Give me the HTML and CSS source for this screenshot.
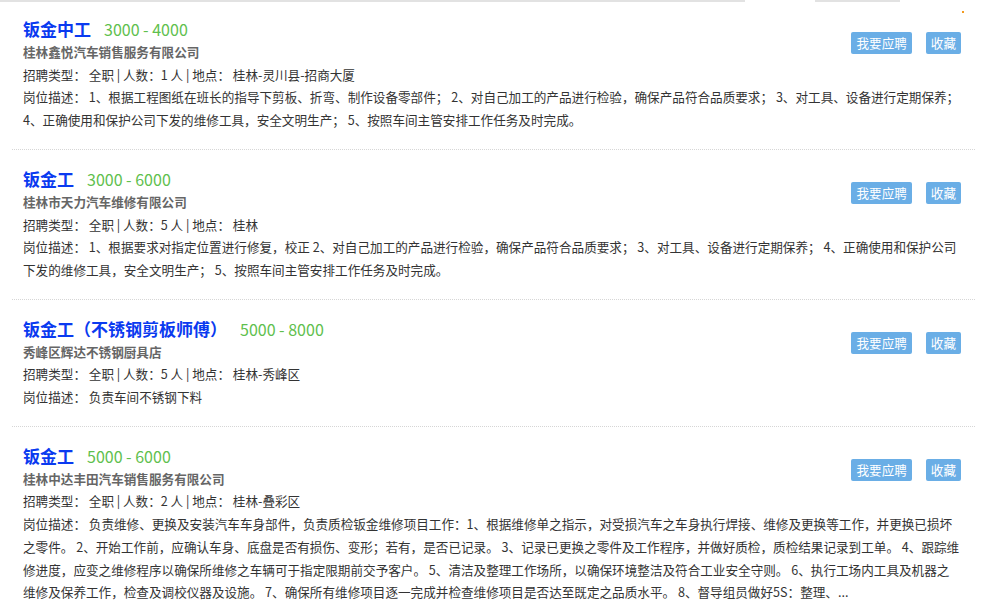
FILE: index.html
```html
<!DOCTYPE html>
<html lang="zh-CN">
<head>
    <meta charset="UTF-8">
    <meta name="viewport" content="width=device-width, initial-scale=1.0">
    <title>招聘信息</title>
    <link rel="stylesheet" href="styles.css">
</head>
<body>
    <!-- leftover of the search bar above -->
    <div class="top-strip">
        <span class="strip-a"></span>
        <span class="strip-b"></span>
        <span class="dot"></span>
    </div>

    <div class="job-list">
        <div class="job">
            <div class="job-btns">
                <a class="btn">我要应聘</a>
                <a class="btn">收藏</a>
            </div>
            <h2 class="job-title">钣金中工<span class="salary">3000 - 4000</span></h2>
            <p class="company">桂林鑫悦汽车销售服务有限公司</p>
            <p class="info">招聘类型： 全职 | 人数：1 人 | 地点： 桂林-灵川县-招商大厦</p>
            <p class="info">岗位描述： 1、根据工程图纸在班长的指导下剪板、折弯、制作设备零部件； 2、对自己加工的产品进行检验，确保产品符合品质要求； 3、对工具、设备进行定期保养； 4、正确使用和保护公司下发的维修工具，安全文明生产； 5、按照车间主管安排工作任务及时完成。</p>
        </div>

        <div class="job">
            <div class="job-btns">
                <a class="btn">我要应聘</a>
                <a class="btn">收藏</a>
            </div>
            <h2 class="job-title">钣金工<span class="salary">3000 - 6000</span></h2>
            <p class="company">桂林市天力汽车维修有限公司</p>
            <p class="info">招聘类型： 全职 | 人数：5 人 | 地点： 桂林</p>
            <p class="info">岗位描述： 1、根据要求对指定位置进行修复，校正 2、对自己加工的产品进行检验，确保产品符合品质要求； 3、对工具、设备进行定期保养； 4、正确使用和保护公司下发的维修工具，安全文明生产； 5、按照车间主管安排工作任务及时完成。</p>
        </div>

        <div class="job">
            <div class="job-btns">
                <a class="btn">我要应聘</a>
                <a class="btn">收藏</a>
            </div>
            <h2 class="job-title">钣金工（不锈钢剪板师傅）<span class="salary">5000 - 8000</span></h2>
            <p class="company">秀峰区辉达不锈钢厨具店</p>
            <p class="info">招聘类型： 全职 | 人数：5 人 | 地点： 桂林-秀峰区</p>
            <p class="info">岗位描述： 负责车间不锈钢下料</p>
        </div>

        <div class="job">
            <div class="job-btns">
                <a class="btn">我要应聘</a>
                <a class="btn">收藏</a>
            </div>
            <h2 class="job-title">钣金工<span class="salary">5000 - 6000</span></h2>
            <p class="company">桂林中达丰田汽车销售服务有限公司</p>
            <p class="info">招聘类型： 全职 | 人数：2 人 | 地点： 桂林-叠彩区</p>
            <p class="info">岗位描述： 负责维修、更换及安装汽车车身部件，负责质检钣金维修项目工作：1、根据维修单之指示，对受损汽车之车身执行焊接、维修及更换等工作，并更换已损坏之零件。 2、开始工作前，应确认车身、底盘是否有损伤、变形；若有，是否已记录。 3、记录已更换之零件及工作程序，并做好质检，质检结果记录到工单。 4、跟踪维修进度，应变之维修程序以确保所维修之车辆可于指定限期前交予客户。 5、清洁及整理工作场所，以确保环境整洁及符合工业安全守则。 6、执行工场内工具及机器之维修及保养工作，检查及调校仪器及设施。 7、确保所有维修项目逐一完成并检查维修项目是否达至既定之品质水平。 8、督导组员做好5S：整理、...</p>
        </div>
    </div>
</body>
</html>
```

FILE: styles.css
```css
*{
    padding: 0;
    margin: 0;
    box-sizing: border-box;
}
body{
    background: #fff;
    font-family: "Microsoft YaHei", "Noto Sans CJK SC", sans-serif;
    font-size: 12.6px;
    color: #333;
}

.top-strip{
    height: 2px;
    display: flex;
    position: relative;
}
.strip-a{
    width: 745px;
    background: #e2e2e2;
}
.strip-b{
    width: 85px;
    margin-left: 70px;
    background: #e2e2e2;
}
.dot{
    position: absolute;
    left: 962px;
    top: 11px;
    width: 2px;
    height: 2px;
    background: #f39a1e;
}

.job-list{
    margin: -2px 8px 0 12px;
}

.job{
    padding: 17px 14px 17px 11px;
    border-bottom: 1px dotted #d6d6d6;
}

.job-btns{
    float: right;
    margin-top: 15px;
    display: flex;
    gap: 14px;
}
.btn{
    display: block;
    height: 22px;
    line-height: 22px;
    padding: 0 5px;
    background: #6aaee6;
    border-radius: 2px;
    color: #fff;
    font-size: 12.6px;
    cursor: pointer;
}

.job-title{
    font-size: 17px;
    line-height: 24px;
    color: #0a3af0;
    font-weight: bold;
}
.salary{
    margin-left: 13px;
    font-size: 16px;
    font-weight: normal;
    color: #5fbf4e;
}

.company{
    line-height: 22.7px;
    color: #666;
    font-weight: bold;
}

.info{
    line-height: 22.7px;
}
```
